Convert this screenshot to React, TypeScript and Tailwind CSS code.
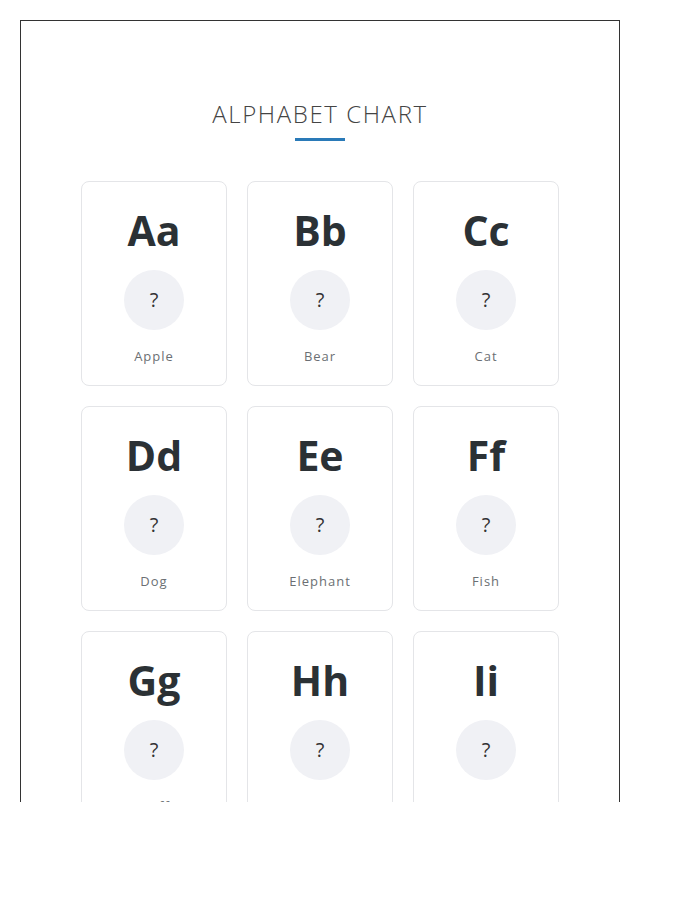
import React from "react";

const items = [
  ["Aa", "Apple"],
  ["Bb", "Bear"],
  ["Cc", "Cat"],
  ["Dd", "Dog"],
  ["Ee", "Elephant"],
  ["Ff", "Fish"],
  ["Gg", "Giraffe"],
  ["Hh", "Horse"],
  ["Ii", "Ice Cream"],
  ["Jj", "Juice"],
  ["Kk", "Kite"],
  ["Ll", "Lion"],
];

const LetterCard: React.FC<{ letter: string; word: string }> = ({ letter, word }) => (
  <div className="flex flex-col items-center rounded-lg border border-[#e4e5e8] bg-white pt-6 pb-[19px]">
    <div className="h-12 text-[41px] leading-[49px] font-bold text-[#2b3135]">{letter}</div>
    <div className="mt-4 flex h-[60px] w-[60px] items-center justify-center rounded-full bg-[#f0f1f5] text-xl text-[#333]">
      ?
    </div>
    <div className="mt-4 h-5 text-[13px] leading-5 tracking-[1px] text-[#6b6f73]">{word}</div>
  </div>
);

export default function App() {
  return (
    <div className="h-[802px] overflow-hidden bg-white p-5 pb-0" style={{ fontFamily: '"Open Sans", "Noto Sans", sans-serif' }}>
      <div className="w-[600px] border border-[#333] bg-white pt-[77px] pb-10">
        <h1 className="text-center text-2xl leading-8 font-light tracking-[1.6px] text-[#444]">ALPHABET CHART</h1>
        <div className="mx-auto mt-2 h-[3px] w-[50px] bg-[#2a7ab8]" />
        <div className="mx-auto mt-10 grid w-[478px] grid-cols-3 gap-5">
          {items.map(([l, w]) => (
            <LetterCard key={l} letter={l} word={w} />
          ))}
        </div>
      </div>
    </div>
  );
}
